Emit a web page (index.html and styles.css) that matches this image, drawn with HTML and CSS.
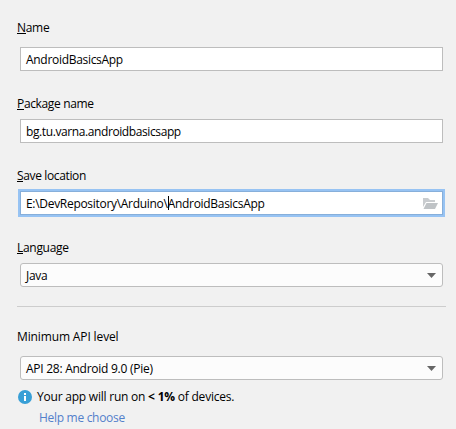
FILE: index.html
```
<!DOCTYPE html>
<html lang="en">
<head>
<meta charset="utf-8">
<title>Configure project</title>
<link rel="stylesheet" href="styles.css">
</head>
<body>
<main class="form">
  <div class="group first">
    <div class="label name-label"><span class="key">N</span>ame</div>
    <div class="field"><span class="name-value">AndroidBasicsApp</span></div>
  </div>
  <div class="group">
    <div class="label package-label"><span class="key">P</span>ackage name</div>
    <div class="field"><span class="package-value">bg.tu.varna.androidbasicsapp</span></div>
  </div>
  <div class="group">
    <div class="label save-label"><span class="key">S</span>ave location</div>
    <div class="field focused"><span class="path-value">E:\DevRepository\Arduino\<i class="caret"></i>AndroidBasicsApp</span>
      <svg class="folder" width="15" height="11" viewBox="0 0 15 11"><path fill="#c9cccf" d="M0 0h5l2 2h5v2H3L0 9z"/><path fill="#bfc3c6" d="M3.5 5H15l-3 6H.5z"/></svg>
    </div>
  </div>
  <div class="group">
    <div class="label language-label"><span class="key">L</span>anguage</div>
    <div class="field combo"><span class="java-value">Java</span>
      <svg class="arrow" width="9" height="5" viewBox="0 0 9 5"><path fill="#666" d="M0 0h9L4.5 5z"/></svg>
    </div>
  </div>
  <hr class="divider">
  <div class="group api">
    <div class="label api-label">Minimum API level</div>
    <div class="field combo"><span class="api-value">API 28: Android 9.0 (Pie)</span>
      <svg class="arrow" width="9" height="5" viewBox="0 0 9 5"><path fill="#666" d="M0 0h9L4.5 5z"/></svg>
    </div>
  </div>
  <div class="info">
    <svg width="14" height="14" viewBox="0 0 14 14"><circle cx="7" cy="7" r="7" fill="#389fd6"/><path fill="#fff" d="M6 3h2v2H6zM6 6h2v5H6z"/></svg>
    <span class="info-text">Your app will run on <b>&lt; 1%</b> of devices.</span>
  </div>
  <a class="help">Help me choose</a>
</main>
</body>
</html>
```
FILE: styles.css
```
* { box-sizing: border-box; }
body {
  margin: 0;
  height: 429px;
  overflow: hidden;
  background: #f1f1f1;
  color: #000;
  font: 12px/16px "Open Sans", "Noto Sans", sans-serif;
  white-space: nowrap;
}
.form { padding: 20px 10px 0 17px; }
.group { height: 72px; }
.label { height: 27px; padding-top: 4px; }
.first .label { padding-top: 0; }
.key { display: inline-block; height: 14px; border-bottom: 1px solid #000; line-height: 16px; }
.field {
  display: flex;
  align-items: center;
  justify-content: space-between;
  width: 423px;
  height: 24px;
  margin-left: 3px;
  padding: 0 5px;
  border: 1px solid #bdbdbd;
  background: #fff;
}
.field > span { padding-top: 2px; }
.focused { border-color: #87afda; box-shadow: 0 0 0 2px #97c3f3; padding-right: 4px; }
.combo { border-radius: 3px; background: #fcfcfc; padding-right: 6px; }
.caret { display: inline-block; width: 1px; height: 14px; margin: -1px -1px 0 0; background: #000; vertical-align: -2px; }
.divider { height: 1px; margin: -2px 0 0; width: 429px; border: 0; background: #cdcdcd; }
.api { margin-top: 22px; height: 58px; }
.api .label { padding-top: 0; }
.info { display: flex; align-items: center; gap: 5px; height: 16px; padding-left: 1px; margin-top: 2px; }
.help { display: block; margin: 5px 0 0 22px; color: #5380cb; letter-spacing: -.3px; }
.name-label, .name-value, .java-value, .path-value { letter-spacing: -.3px; }
.package-label { letter-spacing: -.35px; }
.package-value { letter-spacing: -.4px; }
.save-label { letter-spacing: -.36px; }
.language-label { letter-spacing: -.3px; }
.api-label { letter-spacing: -.13px; }
.api-value { letter-spacing: -.26px; }
.info-text { letter-spacing: -.22px; }
```
